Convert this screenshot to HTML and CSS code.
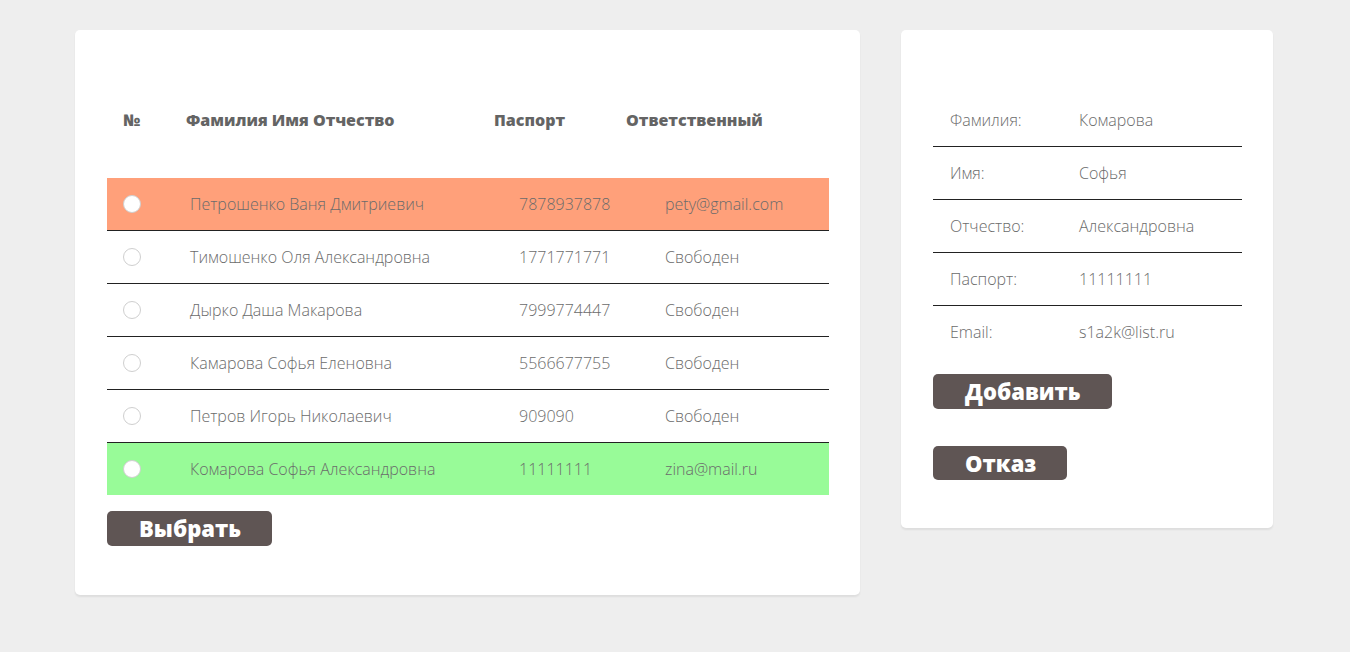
FILE: index.html
```html
<!DOCTYPE html>
<html lang="ru">
<head>
<meta charset="utf-8">
<title>Выбор</title>
<link rel="stylesheet" href="styles.css">
</head>
<body>
<div class="page">
  <section class="card card-main">
    <div class="thead">
      <div>№</div>
      <div>Фамилия Имя Отчество</div>
      <div>Паспорт</div>
      <div>Ответственный</div>
    </div>
    <div class="row row-orange">
      <div><span class="radio"></span></div>
      <div>Петрошенко Ваня Дмитриевич</div>
      <div>7878937878</div>
      <div>pety@gmail.com</div>
    </div>
    <div class="row">
      <div><span class="radio"></span></div>
      <div>Тимошенко Оля Александровна</div>
      <div>1771771771</div>
      <div>Свободен</div>
    </div>
    <div class="row">
      <div><span class="radio"></span></div>
      <div>Дырко Даша Макарова</div>
      <div>7999774447</div>
      <div>Свободен</div>
    </div>
    <div class="row">
      <div><span class="radio"></span></div>
      <div>Камарова Софья Еленовна</div>
      <div>5566677755</div>
      <div>Свободен</div>
    </div>
    <div class="row">
      <div><span class="radio"></span></div>
      <div>Петров Игорь Николаевич</div>
      <div>909090</div>
      <div>Свободен</div>
    </div>
    <div class="row row-green row-last">
      <div><span class="radio"></span></div>
      <div>Комарова Софья Александровна</div>
      <div>11111111</div>
      <div>zina@mail.ru</div>
    </div>
    <button class="btn btn-first">Выбрать</button>
  </section>

  <section class="card card-side">
    <div class="info">
      <div class="info-row"><span class="label">Фамилия:</span><span>Комарова</span></div>
      <div class="info-row"><span class="label">Имя:</span><span>Софья</span></div>
      <div class="info-row"><span class="label">Отчество:</span><span>Александровна</span></div>
      <div class="info-row"><span class="label">Паспорт:</span><span>11111111</span></div>
      <div class="info-row info-last"><span class="label">Email:</span><span>s1a2k@list.ru</span></div>
    </div>
    <button class="btn btn-first">Добавить</button>
    <button class="btn btn-second">Отказ</button>
  </section>
</div>
</body>
</html>
```

FILE: styles.css
```css
* { box-sizing: border-box; }

html, body {
  margin: 0;
  padding: 0;
}

body {
  background: #eeeeee;
  font-family: "Open Sans", "Noto Sans", sans-serif;
  font-weight: 300;
  font-size: 16px;
  color: #6b6b6b;
  min-height: 652px;
}

.page {
  display: flex;
  align-items: flex-start;
  gap: 41px;
  padding: 30px 0 0 75px;
}

.card {
  background: #ffffff;
  border-radius: 5px;
  box-shadow: 0 2px 2px rgba(0, 0, 0, 0.07);
  display: flex;
  flex-direction: column;
  align-items: flex-start;
}

.card-main {
  width: 785px;
  padding: 32px 31px 49px 32px;
}

.card-side {
  width: 372px;
  padding: 64px 31px 48px 32px;
}

.thead {
  width: 100%;
  height: 116px;
  display: grid;
  grid-template-columns: 63px 308px 132px 1fr;
  align-items: center;
  padding-left: 16px;
  font-weight: 800;
  color: #646464;
}

.row {
  width: 100%;
  height: 53px;
  display: grid;
  grid-template-columns: 67px 329px 146px 1fr;
  align-items: center;
  padding-left: 16px;
  border-bottom: 1px solid #222222;
}

.row-last {
  height: 52px;
  border-bottom: none;
}

.row-orange { background: #ffa07a; }
.row-green { background: #98fb98; }

.radio {
  display: block;
  width: 18px;
  height: 18px;
  border-radius: 50%;
  background: #ffffff;
  border: 1px solid #cfcfcf;
}

.info {
  width: 100%;
}

.info-row {
  display: grid;
  grid-template-columns: 129px 1fr;
  align-items: center;
  height: 53px;
  padding-left: 17px;
  border-bottom: 1px solid #222222;
}

.info-last {
  height: 52px;
  border-bottom: none;
}

.btn {
  font-family: "Open Sans", "Noto Sans", sans-serif;
  font-weight: 800;
  font-size: 22px;
  line-height: 35px;
  height: 35px;
  color: #ffffff;
  background: #5f5554;
  border: none;
  border-radius: 5px;
  padding: 0 31px 0 32px;
  cursor: pointer;
}

.btn-first { margin-top: 16px; }
.btn-second { margin-top: 37px; height: 34px; line-height: 34px; }
```
